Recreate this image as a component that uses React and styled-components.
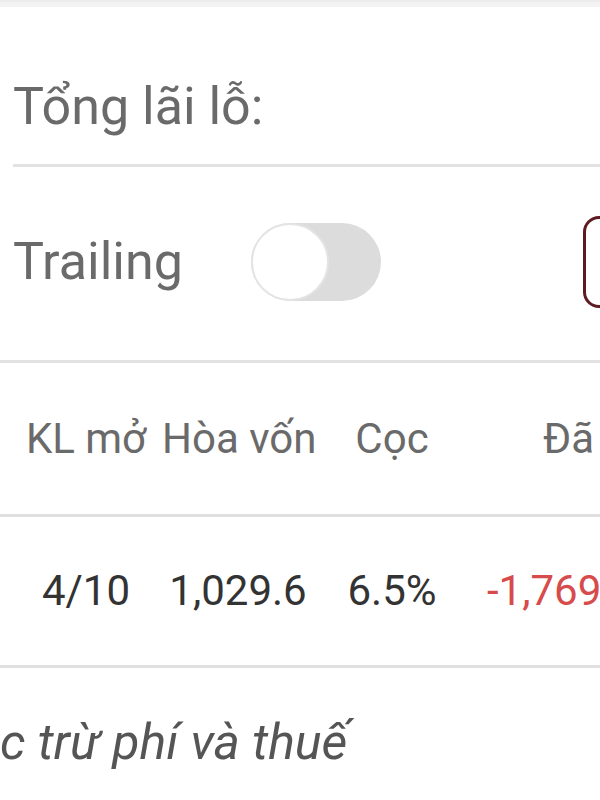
import React from 'react'
import styled, { createGlobalStyle } from 'styled-components'

const GlobalStyle = createGlobalStyle`
  html, body {
    margin: 0;
    padding: 0;
    background: #fff;
  }
  body {
    font-family: Roboto, 'Noto Sans', sans-serif;
  }
`

const Screen = styled.div`
  width: 600px;
  height: 800px;
  overflow: hidden;
  background: #fff;
  display: flex;
  flex-direction: column;
`

const TopStrip = styled.div`
  height: 5px;
  border-top: 2px solid #ececec;
  background: #f3f3f3;
  flex-shrink: 0;
`

const TotalRow = styled.div`
  margin-left: 13px;
  height: 160px;
  border-bottom: 3px solid #e2e2e2;
  display: flex;
  align-items: flex-start;
  padding-top: 74px;
  box-sizing: border-box;
  flex-shrink: 0;
`

const Label = styled.span`
  font-size: 52px;
  line-height: 1;
  color: #6a6a6a;
  white-space: nowrap;
`

const TrailingRow = styled.div`
  height: 196px;
  border-bottom: 3px solid #e2e2e2;
  display: flex;
  align-items: center;
  padding-left: 13px;
  padding-bottom: 4px;
  box-sizing: border-box;
  flex-shrink: 0;
`

const Toggle = styled.div`
  margin-left: 68px;
  width: 130px;
  height: 78px;
  border-radius: 39px;
  background: #dcdcdc;
  display: flex;
  align-items: center;
  flex-shrink: 0;
`

const Knob = styled.div`
  width: 74px;
  height: 74px;
  border-radius: 50%;
  background: #fff;
  border: 2px solid #e4e4e4;
`

const OutlineBox = styled.div`
  margin-left: auto;
  margin-right: -123px;
  width: 134px;
  height: 86px;
  border: 3px solid #5e1b22;
  border-radius: 16px;
  flex-shrink: 0;
`

const TableRow = styled.div`
  height: ${(p) => p.$height}px;
  border-bottom: 3px solid #e0e0e0;
  display: grid;
  grid-template-columns: 152px 152px 156px 1fr;
  align-items: center;
  padding-left: 10px;
  box-sizing: border-box;
  flex-shrink: 0;
`

const Cell = styled.span`
  font-size: 42px;
  line-height: 1;
  white-space: nowrap;
  text-align: ${(p) => (p.$indent != null ? 'left' : 'center')};
  padding-left: ${(p) => p.$indent || 0}px;
  color: ${(p) => (p.$tone === 'head' ? '#6a6a6a' : p.$tone === 'neg' ? '#d64b4b' : '#333')};
`

const Note = styled.div`
  padding-top: 45px;
  font-size: 50px;
  font-style: italic;
  color: #555;
  white-space: nowrap;
`

export default function App() {
  return (
    <>
      <GlobalStyle />
      <Screen>
        <TopStrip />
        <TotalRow>
          <Label>Tổng lãi lỗ:</Label>
        </TotalRow>
        <TrailingRow>
          <Label>Trailing</Label>
          <Toggle>
            <Knob />
          </Toggle>
          <OutlineBox />
        </TrailingRow>
        <TableRow $height={154}>
          <Cell $tone="head">KL mở</Cell>
          <Cell $tone="head">Hòa vốn</Cell>
          <Cell $tone="head">Cọc</Cell>
          <Cell $tone="head" $indent={73}>Đã</Cell>
        </TableRow>
        <TableRow $height={151}>
          <Cell>4/10</Cell>
          <Cell>1,029.6</Cell>
          <Cell>6.5%</Cell>
          <Cell $tone="neg" $indent={17}>-1,769</Cell>
        </TableRow>
        <Note>c trừ phí và thuế</Note>
      </Screen>
    </>
  )
}
